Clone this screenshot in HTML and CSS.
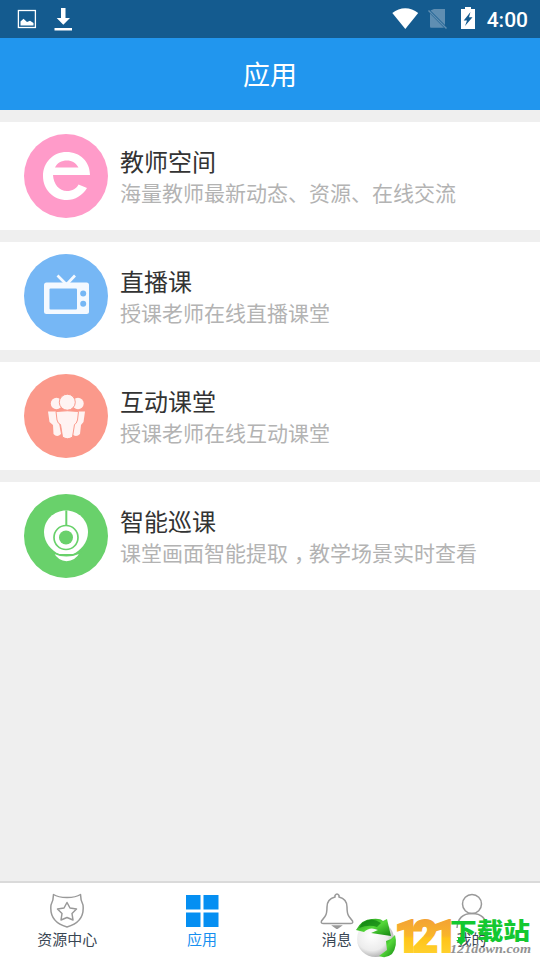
FILE: index.html
```html
<!DOCTYPE html>
<html lang="zh-CN">
<head>
<meta charset="utf-8">
<title>应用</title>
<link rel="stylesheet" href="styles.css">
</head>
<body>
<div class="app">
  <div class="status">
    <svg class="status-left" viewBox="0 0 90 38" fill="none">
      <rect x="18.4" y="10.5" width="17" height="17" stroke="#fff" stroke-width="1.3"/>
      <path d="M20.5 25.5V21.5L23.5 18.7L27 22L30 20.7L33.5 23V25.5Z" fill="#fff"/>
      <path d="M61 8H65.5V18H70L63.3 24.8L56.7 18H61ZM54.5 28H72V30.5H54.5Z" fill="#fff"/>
    </svg>
    <svg class="status-right" viewBox="390 0 90 38" fill="none">
      <path d="M392.3 13C400 6.7 410.5 6.7 418.2 13L405.3 29Z" fill="#fff"/>
      <path d="M434 9H445V25L430.5 10.500ZM430 13.500L444 27.700H431Q430 27.700 430 26.500Z" fill="#5f8eb2"/>
      <path d="M428.500 10.500L446.500 28.500" stroke="#5f8eb2" stroke-width="1.500"/>
      <path d="M461 9H465V7H471V9H475V29H461Z" fill="#fff"/>
      <path d="M470.500 12L463.700 20.500H467L465 26L472.500 17.200H469Z" fill="#145b8f"/>
    </svg>
    <span class="clock">4:00</span>
  </div>
  <header class="header">应用</header>
  <main class="list">
    <section class="row">
      <svg class="icon" viewBox="0 0 84 84">
        <circle cx="42" cy="42" r="42" fill="#ff9bc9"/>
        <path fill-rule="evenodd" d="M42.500 18C56 18 66 27.500 66 41H29C29.500 50 35 57 43 57C48.500 57 52.500 54.500 54.500 50.500L63 54C58.500 61.500 51 66 43 66C29 66 19 55.500 19 42C19 28.500 29 18 42.500 18ZM31 33.500H54.500C52 29 48 26.500 43 26.500C37.500 26.500 33 29 31 33.500Z" fill="#fff"/>
      </svg>
      <div class="copy"><h2>教师空间</h2><p>海量教师最新动态、资源、在线交流</p></div>
    </section>
    <section class="row">
      <svg class="icon" viewBox="0 0 84 84">
        <circle cx="42" cy="42" r="42" fill="#76b7f5"/>
        <path d="M33.500 21.500L42.500 30.500L51 21.500" fill="none" stroke="#f4f9ff" stroke-width="2.700"/>
        <rect x="20" y="28.500" width="45" height="31.500" rx="2.500" fill="#f4f9ff"/>
        <rect x="25.500" y="34.500" width="27.500" height="21" rx="1" fill="#76b7f5"/>
        <circle cx="59.200" cy="39.500" r="3" fill="#76b7f5"/><circle cx="59.200" cy="49.700" r="3" fill="#76b7f5"/>
      </svg>
      <div class="copy"><h2>直播课</h2><p>授课老师在线直播课堂</p></div>
    </section>
    <section class="row">
      <svg class="icon" viewBox="0 0 84 84">
        <circle cx="42" cy="42" r="42" fill="#fb998b"/>
        <g fill="#fff3f2">
          <circle cx="32.500" cy="29.500" r="5.700"/><circle cx="54" cy="29.500" r="5.700"/>
          <path d="M24 37.500H33L37 60Q33 64 29.500 60L29 51L25.500 48ZM61 37.500H52L48 60Q52 64 56 60L57 51L59.500 48Z"/>
        </g>
        <g fill="#fff3f2" stroke="#fb998b" stroke-width="1">
          <circle cx="43.300" cy="28.200" r="8"/>
          <path d="M32 37.500Q43.500 36 54.500 37.500L53.500 46Q52.500 50 50.500 50.500L48.500 63Q43.500 66.500 38.500 63L36.500 50.500Q34 50 33 46Z"/>
        </g>
      </svg>
      <div class="copy"><h2>互动课堂</h2><p>授课老师在线互动课堂</p></div>
    </section>
    <section class="row">
      <svg class="icon" viewBox="0 0 84 84">
        <circle cx="42" cy="42" r="42" fill="#69d16b"/>
        <path d="M42 16.500C54 16.500 64 26 64 38C64 49 56 57 49 60H35C28 57 20 49 20 38C20 26 30 16.500 42 16.500Z" fill="#fff"/>
        <path d="M28.500 58.500Q42 65 57 58.500Q51.500 68 42.500 68Q34 68 28.500 58.500Z" fill="#fff" stroke="#69d16b" stroke-width="1.500"/>
        <path d="M42.300 16.500V32" stroke="#69d16b" stroke-width="2"/>
        <circle cx="42" cy="43.500" r="12" fill="none" stroke="#69d16b" stroke-width="1.700"/>
        <circle cx="42" cy="43.500" r="7" fill="#69d16b"/>
      </svg>
      <div class="copy"><h2>智能巡课</h2><p>课堂画面智能提取<span class="comma">，</span>教学场景实时查看</p></div>
    </section>
  </main>
  <nav class="tabs">
    <div class="tab">
      <svg class="tab-icon" viewBox="0 0 36 36" fill="none" stroke="#999" stroke-width="1.500" stroke-linejoin="round">
        <path d="M4.500 1.500Q9 4.500 18 4.500Q27 4.500 31.500 1.500Q31.500 7 34 12Q36 29 18 34Q0 29 2 12Q4.500 7 4.500 1.500Z"/>
        <path d="M18 9.500L21 15L27.500 16L23 20.500L24 27L18 24.500L12 27L13 20.500L8.500 16L15 15Z"/>
      </svg><span>资源中心</span>
    </div>
    <div class="tab active">
      <svg class="tab-icon" viewBox="0 0 36 36" fill="#058ff2"><path d="M2 2H16.500V16.500H2ZM19.500 2H34.500V16.500H19.500ZM2 19.500H16.500V34H2ZM19.500 19.500H34.500V34H19.500Z"/></svg><span>应用</span>
    </div>
    <div class="tab">
      <svg class="tab-icon" viewBox="0 0 36 36" fill="none" stroke="#999" stroke-width="1.500">
        <path d="M16 2.500Q18 -.5 20 2.500V4Q28 6 28 14Q28 21 30 23.500L33.500 28Q34.500 30.500 31.500 30.500H4.500Q1.500 30.500 2.500 28L6 23.500Q8 21 8 14Q8 6 16 4Z"/>
        <path d="M14.500 33H21.500L18 35.500Z" fill="#999"/>
      </svg><span>消息</span>
    </div>
    <div class="tab">
      <svg class="tab-icon" viewBox="0 0 36 36" fill="none" stroke="#999" stroke-width="1.500"><circle cx="18" cy="11" r="9.500"/><path d="M3 35Q4 20.500 18 20.500Q32 20.500 33 35"/></svg><span>我的</span>
    </div>
  </nav>
  <svg class="watermark" viewBox="352 912 188 48">
    <defs>
      <linearGradient id="gold" x1="0" y1="920" x2="0" y2="953" gradientUnits="userSpaceOnUse"><stop offset="0" stop-color="#f3a334"/><stop offset=".48" stop-color="#f9b52a"/><stop offset=".55" stop-color="#ffc31a"/><stop offset="1" stop-color="#ffd02c"/></linearGradient>
      <radialGradient id="ball" cx=".4" cy=".4" r=".65"><stop offset="0" stop-color="#fff"/><stop offset=".65" stop-color="#ececec"/><stop offset="1" stop-color="#a9a9a9"/></radialGradient>
      <linearGradient id="leaf" x1="0" y1="0" x2="1" y2="1"><stop offset="0" stop-color="#168b14"/><stop offset=".5" stop-color="#55d83a"/><stop offset="1" stop-color="#12850f"/></linearGradient>
    </defs>
    <ellipse cx="375.500" cy="939" rx="18.500" ry="18" fill="url(#ball)"/>
    <path d="M356 930Q362 919 372 919Q380 918 383 921L387 919L391 936L371 933L378 930Q370 926 364 932Z" fill="url(#leaf)"/>
    <path d="M362 923Q371 916 381 923L377 927Q369 924 359 928Z" fill="#08780d" opacity=".65"/>
    <path d="M395 935Q398 946 392 954Q386 959 379 956L387 950L386 941L391 939Z" fill="url(#leaf)"/>
    <text class="wm-number" x="394.500 412.500 432" y="952" fill="url(#gold)" stroke="url(#gold)">121</text>
    <text class="wm-name" x="450" y="939" textLength="80" lengthAdjust="spacingAndGlyphs">下载站</text>
    <path d="M458 937H463V940H466L461 945L456 940H458Z" fill="#13c831"/>
    <text class="wm-url" x="450" y="953" textLength="81" lengthAdjust="spacingAndGlyphs">121down.com</text>
  </svg>
</div>
</body>
</html>
```
FILE: styles.css
```css
* { box-sizing: border-box; }
body { margin: 0; font-family: Roboto, "Noto Sans CJK SC", sans-serif; }
.app { position: relative; width: 540px; height: 960px; display: flex; flex-direction: column; background: #efefef; overflow: hidden; }
.status { height: 38px; flex: none; display: flex; align-items: center; background: #145b8f; color: #fff; padding-right: 12px; }
.status-left { width: 90px; height: 38px; margin-right: auto; }
.status-right { width: 90px; height: 38px; }
.clock { width: 48px; text-align: right; font-size: 21px; font-weight: 500; line-height: 38px; padding-top: 1px; white-space: nowrap; }
.header { height: 72px; flex: none; background: #2196ee; color: #fff; font-size: 27px; line-height: 72px; padding-top: 2px; text-align: center; }
.list { flex: 1; padding-top: 12px; display: flex; flex-direction: column; gap: 12px; }
.row { height: 108px; padding: 0 24px; background: #fff; display: flex; align-items: center; gap: 12px; }
.icon { width: 84px; height: 84px; flex: none; }
.copy { white-space: nowrap; padding-top: 4px; }
.copy h2 { margin: 0; font-size: 24px; line-height: 32px; font-weight: 400; color: #333; }
.copy p { margin: 0; font-size: 21px; line-height: 30px; color: #b3b3b3; }
.comma { display: inline-block; width: 21px; text-indent: 6px; line-height: 1; }
.tabs { height: 79px; flex: none; display: flex; background: #fff; border-top: 2px solid #dadada; padding-right: 1px; }
.tab { flex: 1; display: flex; flex-direction: column; align-items: center; padding-top: 10px; font-size: 15px; line-height: 22px; color: #394653; }
.tab-icon { width: 36px; height: 36px; }
.active { color: #168ff0; }
.watermark { position: absolute; left: 352px; top: 912px; width: 188px; height: 48px; }
.wm-number { font-family: Roboto, sans-serif; font-size: 44px; font-weight: 900; stroke-width: 2px; }
.wm-name { font-family: "Noto Sans CJK SC", sans-serif; font-size: 23px; font-weight: 900; fill: #13c831; }
.wm-url { font-family: "Liberation Serif", serif; font-size: 12px; font-weight: 700; font-style: italic; fill: #929292; }
```
